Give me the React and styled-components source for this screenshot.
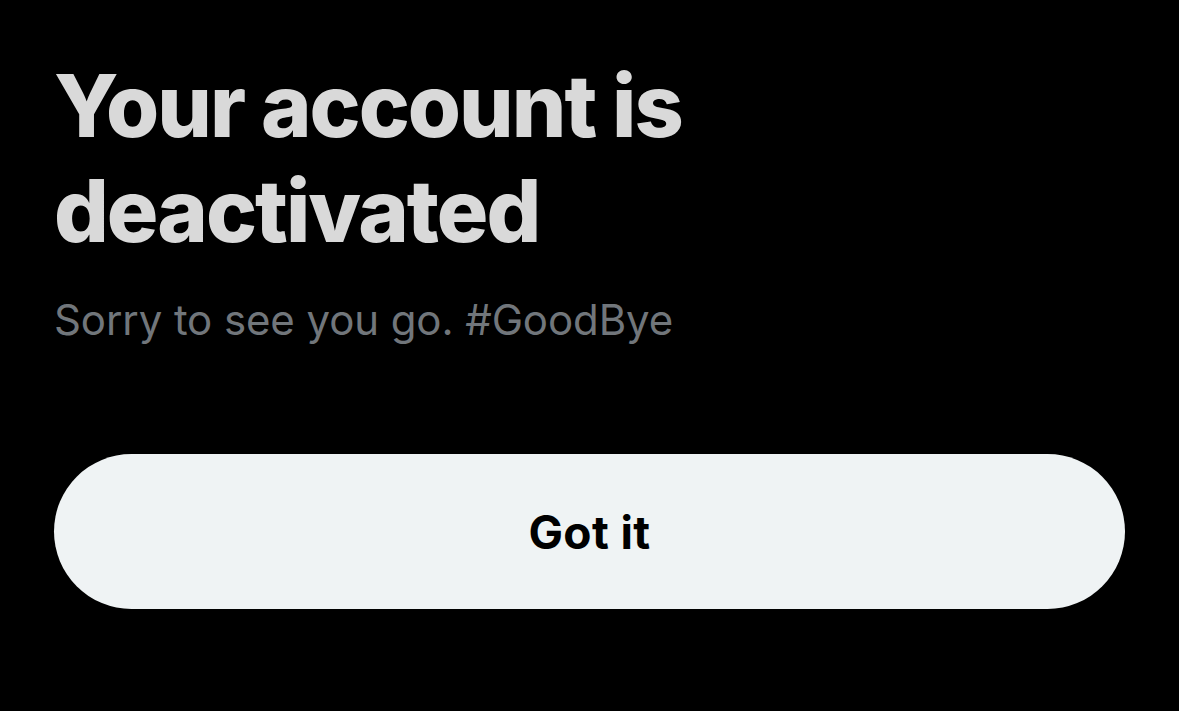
import React from "react";
import styled, { createGlobalStyle } from "styled-components";

const GlobalStyle = createGlobalStyle`
  html, body {
    margin: 0;
    padding: 0;
    background: #000000;
  }
  body {
    font-family: Inter, "Noto Sans", "Liberation Sans", sans-serif;
  }
`;

const Screen = styled.div`
  width: 1179px;
  height: 711px;
  background: #000000;
  box-sizing: border-box;
  padding: 54px 54px 0 54px;
  display: flex;
  flex-direction: column;
`;

const Heading = styled.h1`
  margin: 0;
  color: #d9d9d9;
  font-size: 86px;
  line-height: 105px;
  font-weight: 800;
  letter-spacing: -2px;
`;

const Subtitle = styled.p`
  margin: 28px 0 0 0;
  color: #71767b;
  font-size: 42px;
  line-height: 56px;
  font-weight: 400;
  letter-spacing: -0.1px;
`;

const PillButton = styled.button`
  margin-top: 106px;
  height: 155px;
  width: 100%;
  border: none;
  border-radius: 78px;
  background: #eff3f4;
  color: #000000;
  font-family: Inter, "Noto Sans", sans-serif;
  font-size: 46px;
  font-weight: 700;
  letter-spacing: 0.4px;
  cursor: pointer;
`;

export default function App() {
  return (
    <>
      <GlobalStyle />
      <Screen>
        <Heading>
          Your account is
          <br />
          deactivated
        </Heading>
        <Subtitle>Sorry to see you go. #GoodBye</Subtitle>
        <PillButton>Got it</PillButton>
      </Screen>
    </>
  );
}
